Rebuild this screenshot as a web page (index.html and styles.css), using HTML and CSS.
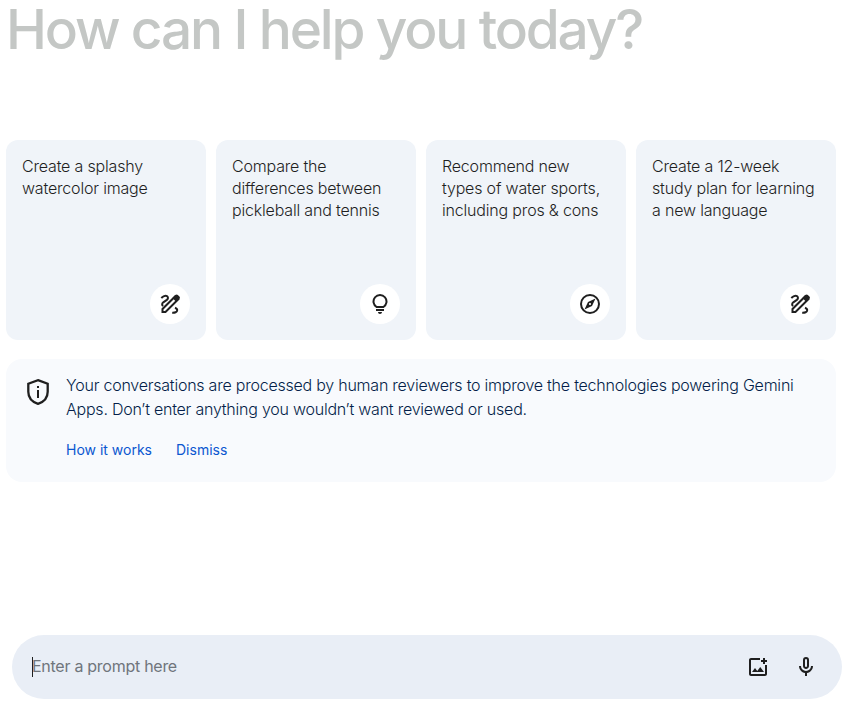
FILE: index.html
```html
<!DOCTYPE html>
<html lang="en">
<head>
    <meta charset="UTF-8">
    <meta name="viewport" content="width=device-width, initial-scale=1.0">
    <title>Gemini</title>
    <link rel="stylesheet" href="styles.css">
</head>
<body>
    <!-- Shared icons -->
    <svg class="icon-defs" width="0" height="0">
        <symbol id="icon-draw" viewBox="0 0 24 24">
            <path d="M3.300 6C5 4.300 7.500 3 9.200 4.300c1.500 1.300.6 2.900-.7 3.900L5.300 10.300c-1.500 1.200-1.500 2.700-.2 3.700M4.500 20v-3L17.300 4.200l3 3L7.500 20zM14.200 20.800c2.500.2 4.900-.8 5-2.600.1-1.200-.8-2-2.200-2.500" fill="none" stroke="currentColor" stroke-width="2"/>
            <path d="M14.500 6l3-3c.7-.7 1.700-.7 2.400 0l1.500 1.500c.7.7.7 1.700 0 2.400l-3.100 3.100z"/>
        </symbol>
        <symbol id="icon-bulb" viewBox="0 0 24 24">
            <path d="M12 22c-1.100 0-2-.9-2-2h4c0 1.100-.9 2-2 2zM8 17h8v2H8zM8.250 16a7.500 7.500 0 1 1 7.500 0zM8.850 14h6.300a5.500 5.500 0 1 0-6.300 0z" fill-rule="evenodd"/>
        </symbol>
        <symbol id="icon-compass" viewBox="0 0 24 24">
            <path d="M12 2a10 10 0 1 0 0 20 10 10 0 0 0 0-20zm0 18a8 8 0 1 1 0-16 8 8 0 0 1 0 16zM6.500 17.500l7.500-3.500 3.500-7.500L10 10zM12 10.900a1.100 1.100 0 1 1 0 2.200 1.100 1.100 0 0 1 0-2.200z" fill-rule="evenodd"/>
        </symbol>
    </svg>

    <h1 class="greeting">How can I help you today?</h1>

    <div class="cards">
        <div class="card">
            <p>Create a splashy<br>watercolor image</p>
            <div class="card-icon"><svg><use href="#icon-draw"/></svg></div>
        </div>
        <div class="card">
            <p>Compare the<br>differences between<br>pickleball and tennis</p>
            <div class="card-icon"><svg><use href="#icon-bulb"/></svg></div>
        </div>
        <div class="card">
            <p>Recommend new<br>types of water sports,<br>including pros &amp; cons</p>
            <div class="card-icon"><svg><use href="#icon-compass"/></svg></div>
        </div>
        <div class="card">
            <p>Create a 12-week<br>study plan for learning<br>a new language</p>
            <div class="card-icon"><svg><use href="#icon-draw"/></svg></div>
        </div>
    </div>

    <div class="notice">
        <svg class="shield" viewBox="0 0 24 28">
            <path d="M12 2.200l9.700 3.500v8c0 5.800-4 10.200-9.700 12.100-5.700-1.900-9.700-6.300-9.700-12.100v-8z" fill="none" stroke="currentColor" stroke-width="2.300"/>
            <path d="M11 12h2v8h-2zM11 8h2v2h-2z"/>
        </svg>
        <div class="notice-body">
            <p>Your conversations are processed by human reviewers to improve the technologies powering Gemini<br>Apps. Don’t enter anything you wouldn’t want reviewed or used.</p>
            <div class="notice-links">
                <a>How it works</a>
                <a>Dismiss</a>
            </div>
        </div>
    </div>

    <div class="prompt">
        <span class="caret"></span>
        <span class="placeholder">Enter a prompt here</span>
        <svg class="prompt-icon" viewBox="0 0 24 24">
            <path d="M5 21c-1.100 0-2-.9-2-2V5c0-1.100.9-2 2-2h9v2H5v14h14v-9h2v9c0 1.100-.9 2-2 2zM6 17h12l-3.750-5-3 4L9 13zM17 9V7h-2V5h2V3h2v2h2v2h-2v2z"/>
        </svg>
        <svg class="prompt-icon" viewBox="0 0 24 24">
            <path d="M12 14c-1.660 0-3-1.340-3-3V5a3 3 0 0 1 6 0v6c0 1.660-1.340 3-3 3zM11 5v6a1 1 0 0 0 2 0V5a1 1 0 0 0-2 0zM11 21v-3.080C7.600 17.440 5 14.530 5 11h2a5 5 0 0 0 10 0h2c0 3.530-2.610 6.440-6 6.920V21z" fill-rule="evenodd"/>
        </svg>
    </div>
</body>
</html>
```
FILE: styles.css
```css
* {
    box-sizing: border-box;
}
body {
    margin: 0;
    height: 706px;
    background-color: #fff;
    color: #1f1f1f;
    font-family: Inter, Roboto, sans-serif;
    display: flex;
    flex-direction: column;
}
p {
    margin: 0;
    white-space: nowrap;
}
svg {
    fill: currentColor;
}
.icon-defs {
    position: absolute;
}
.greeting {
    margin: 0 0 76px 6px;
    height: 64px;
    line-height: 59px;
    font-size: 55px;
    font-weight: 550;
    letter-spacing: -2.17px;
    color: #c4c7c5;
    white-space: nowrap;
}
/* Suggestion cards */
.cards {
    display: flex;
    gap: 10px;
    margin-left: 6px;
}
.card {
    width: 200px;
    height: 200px;
    padding: 15px 16px 16px;
    background-color: #f0f4f9;
    border-radius: 12px;
    display: flex;
    flex-direction: column;
    justify-content: space-between;
    font-size: 16px;
    font-weight: 300;
    line-height: 22px;
    letter-spacing: -0.18px;
}
.card-icon {
    width: 40px;
    height: 40px;
    border-radius: 50%;
    background-color: #fff;
    align-self: flex-end;
    display: flex;
    justify-content: center;
    align-items: center;
}
.card-icon svg {
    width: 24px;
    height: 24px;
}
/* Privacy notice */
.notice {
    width: 830px;
    height: 123px;
    margin: 19px 0 0 6px;
    padding: 14px 20px;
    background-color: #f8fafd;
    border-radius: 16px;
    display: flex;
    gap: 16px;
}
.shield {
    width: 24px;
    height: 28px;
    margin-top: 5px;
}
.notice-body {
    font-size: 16px;
    font-weight: 300;
    line-height: 24px;
    letter-spacing: -0.23px;
    color: #041e49;
}
.notice-links {
    display: flex;
    gap: 24px;
    margin-top: 19px;
    font-size: 14px;
    font-weight: 400;
    line-height: 20px;
    letter-spacing: 0;
    color: #0b57d0;
}
/* Prompt bar */
.prompt {
    width: 830px;
    height: 64px;
    margin: 153px 0 0 12px;
    padding: 0 24px 0 20px;
    background-color: #e9eef6;
    border-radius: 32px;
    display: flex;
    align-items: center;
}
.caret {
    width: 1px;
    height: 20px;
    background-color: #1f1f1f;
}
.placeholder {
    flex: 1;
    margin-left: -1px;
    padding-bottom: 2px;
    font-size: 16px;
    color: #70757c;
    letter-spacing: -0.27px;
}
.prompt-icon {
    width: 24px;
    height: 24px;
    margin-left: 24px;
}
```
